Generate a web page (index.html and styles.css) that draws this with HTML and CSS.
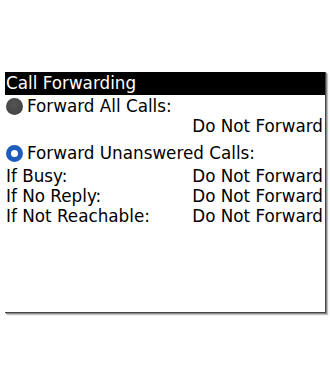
FILE: index.html
```html
<!DOCTYPE html>
<html>
<head>
<meta charset="utf-8">
<link rel="stylesheet" href="styles.css">
</head>
<body>
<div class="screen">
  <div class="title">Call Forwarding</div>
  <div class="radio-row">
    <span class="radio radio-off"></span>
    <span class="label">Forward All Calls:</span>
  </div>
  <div class="value-row">Do Not Forward</div>
  <div class="radio-row radio-row-2">
    <span class="radio radio-on"></span>
    <span class="label">Forward Unanswered Calls:</span>
  </div>
  <div class="grid">
    <span class="gl">If Busy:</span><span class="gv">Do Not Forward</span>
    <span class="gl">If No Reply:</span><span class="gv">Do Not Forward</span>
    <span class="gl">If Not Reachable:</span><span class="gv">Do Not Forward</span>
  </div>
</div>
</body>
</html>
```
FILE: styles.css
```css
html, body {
  margin: 0;
  padding: 0;
  background: #ffffff;
}
body {
  font-family: "DejaVu Sans", "Liberation Sans", sans-serif;
  font-size: 16.8px;
  color: #000;
  padding-bottom: 40px;
}
.screen {
  margin: 72px 0 0 5px;
  width: 320px;
  height: 240px;
  background: #fff;
  border-right: 1px solid #444;
  border-bottom: 1px solid #444;
  box-shadow: 1px 1px 0 #888, 2px 2px 1px rgba(0, 0, 0, 0.25);
  display: flex;
  flex-direction: column;
}
.title {
  background: #000;
  color: #fff;
  height: 23px;
  line-height: 22px;
  padding-left: 1px;
}
.radio-row {
  display: flex;
  align-items: center;
  height: 20px;
  padding-left: 1px;
  margin-top: 1px;
}
.radio-row-2 {
  margin-top: 7px;
}
.radio {
  width: 17px;
  height: 17px;
  border-radius: 50%;
  box-sizing: border-box;
  margin-right: 4px;
  flex: none;
}
.radio-off {
  background: radial-gradient(circle at 45% 40%, #555 0%, #444 70%, #3c3c3c 100%);
}
.radio-on {
  border: 5.5px solid #1e5cbc;
  background: #fff;
}
.label {
  line-height: 20px;
}
.value-row {
  height: 20px;
  line-height: 20px;
  text-align: right;
  padding-right: 2px;
}
.grid {
  display: grid;
  grid-template-columns: 1fr auto;
  margin-top: 3px;
  padding: 0 2px 0 1px;
  line-height: 20px;
}
.gv {
  text-align: right;
}
```
